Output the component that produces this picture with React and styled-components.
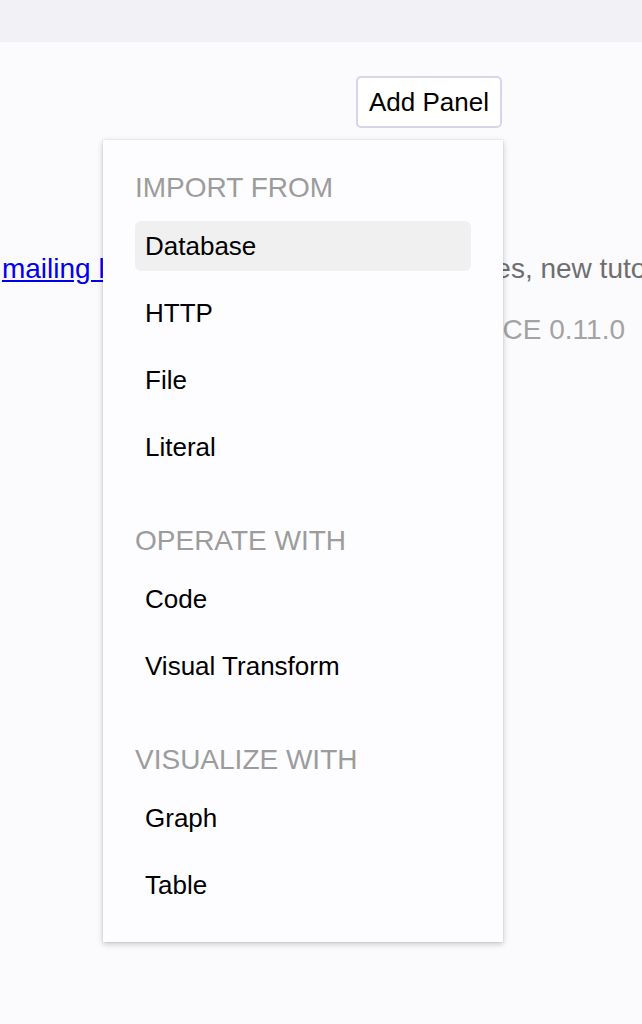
import React from 'react';
import styled, { createGlobalStyle } from 'styled-components';

const GlobalStyle = createGlobalStyle`
  body {
    margin: 0;
    background-color: #fbfbfe;
    font-family: "Liberation Sans", Arial, Helvetica, sans-serif;
  }
`;

const Page = styled.div`
  min-height: 100vh;
  overflow: hidden;
`;

const TopBar = styled.div`
  height: 42px;
  background-color: #f2f1f6;
`;

const Main = styled.main`
  padding-top: 34px;
`;

const Toolbar = styled.div`
  display: flex;
  justify-content: flex-end;
  padding-right: 140px;
`;

const MenuAnchor = styled.div`
  position: relative;
`;

const AddButton = styled.button`
  font-family: inherit;
  font-size: 26px;
  line-height: 30px;
  padding: 9px 11px;
  color: #000;
  background-color: #fff;
  border: 2px solid #d8d5ea;
  border-radius: 5px;
  cursor: pointer;
`;

const Menu = styled.div`
  position: absolute;
  top: calc(100% + 12px);
  right: -1px;
  width: 400px;
  box-sizing: border-box;
  padding: 32px;
  display: flex;
  flex-direction: column;
  gap: 53px;
  background-color: #fdfdff;
  box-shadow: 0 2px 6px rgba(0, 0, 0, 0.22), 0 0 0 1px rgba(0, 0, 0, 0.03);
  z-index: 10;
`;

const Section = styled.div`
  display: flex;
  flex-direction: column;
  gap: 17px;
`;

const SectionTitle = styled.div`
  font-size: 28px;
  line-height: 32px;
  color: #9c9c9c;
  text-transform: uppercase;
`;

const MenuItem = styled.div`
  height: 50px;
  line-height: 50px;
  padding: 0 10px;
  font-size: 26px;
  color: #000;
  border-radius: 6px;
  background-color: ${props => (props.active ? '#f0f0f0' : 'transparent')};
  cursor: pointer;
`;

const Footer = styled.footer`
  margin-top: 125px;
  width: 863px;
  text-align: center;
  font-size: 28px;
  line-height: 32px;
`;

const MailingLine = styled.div`
  white-space: nowrap;
  color: #6f6f6f;
  display: flex;
  justify-content: center;
`;

const MailLink = styled.a`
  color: #0000ee;
  text-decoration: underline;
`;

const VersionLine = styled.div`
  margin-top: 29px;
  white-space: nowrap;
  color: #a3a3a3;
`;

const sections = [
  { title: 'Import from', items: ['Database', 'HTTP', 'File', 'Literal'] },
  { title: 'Operate with', items: ['Code', 'Visual Transform'] },
  { title: 'Visualize with', items: ['Graph', 'Table'] },
];

function App() {
  return (
    <Page>
      <GlobalStyle />
      <TopBar />
      <Main>
        <Toolbar>
          <MenuAnchor>
            <AddButton>Add Panel</AddButton>
            <Menu>
              {sections.map(section => (
                <Section key={section.title}>
                  <SectionTitle>{section.title}</SectionTitle>
                  {section.items.map(item => (
                    <MenuItem key={item} active={item === 'Database'}>
                      {item}
                    </MenuItem>
                  ))}
                </Section>
              ))}
            </Menu>
          </MenuAnchor>
        </Toolbar>
        <Footer>
          <MailingLine>
            <span>
              Join the <MailLink href="#">mailing list</MailLink> to get updates
              on new features, new tutorials, and more. Have fun!
            </span>
          </MailingLine>
          <VersionLine>DataStation Desktop CE 0.11.0</VersionLine>
        </Footer>
      </Main>
    </Page>
  );
}

export default App;
